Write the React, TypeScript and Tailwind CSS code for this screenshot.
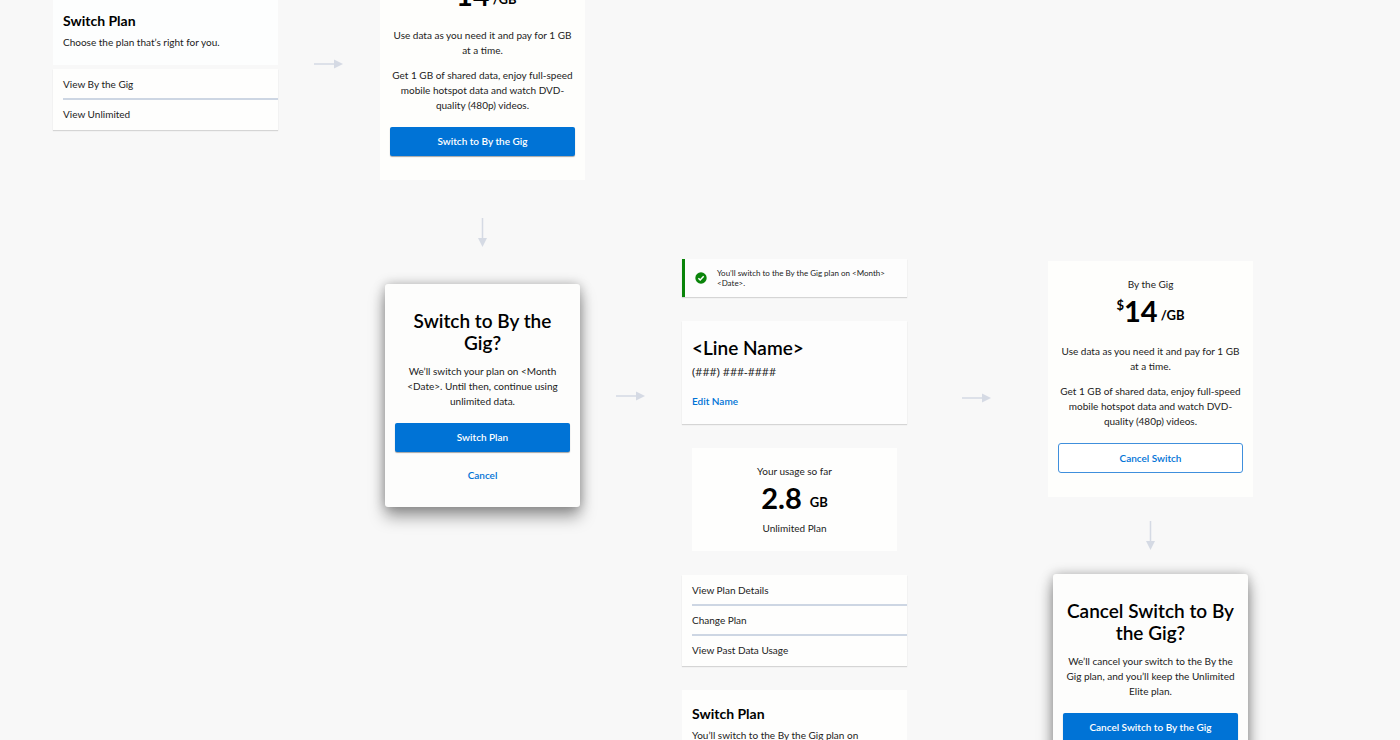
import type { ReactNode } from "react";

function ArrowRight({ className }: { className: string }) {
  return (
    <svg className={`absolute ${className}`} width="29" height="10" viewBox="0 0 29 10" aria-hidden="true">
      <path d="M0 5H21" stroke="#d5dae4" strokeWidth="1.5" />
      <path d="M20 0.5L29 5L20 9.5Z" fill="#d5dae4" />
    </svg>
  );
}

function ArrowDown({ className }: { className: string }) {
  return (
    <svg className={`absolute ${className}`} width="11" height="29" viewBox="0 0 11 29" aria-hidden="true">
      <path d="M5.5 0V21" stroke="#d5dae4" strokeWidth="1.5" />
      <path d="M1 20L5.5 29L10 20Z" fill="#d5dae4" />
    </svg>
  );
}

function PrimaryButton({ children }: { children: ReactNode }) {
  return (
    <button
      type="button"
      className="h-[29px] w-full rounded-xs bg-[#0073d6] text-[10px] font-semibold text-white shadow-[0_1px_1px_rgba(0,0,0,0.35)]"
    >
      {children}
    </button>
  );
}

function PriceCard({ action }: { action: ReactNode }) {
  return (
    <section className="w-[205px] bg-[#fefefc] px-[10px] pt-4 pb-6 text-center">
      <p>By the Gig</p>
      <p className="flex h-[36px] items-center justify-center font-bold text-black">
        <span className="pb-[10px] text-[13px]">$</span>
        <span className="text-[29px]">14</span>
        <span className="pt-[11px] pl-[3px] text-[13px]">/GB</span>
      </p>
      <p className="mt-4">
        Use data as you need it and pay for 1 GB
        <br />
        at a time.
      </p>
      <p className="mt-[10px]">
        Get 1 GB of shared data, enjoy full-speed
        <br />
        mobile hotspot data and watch DVD-
        <br />
        quality (480p) videos.
      </p>
      <div className="mt-[14px]">{action}</div>
    </section>
  );
}

function Dialog({ title, body, confirm }: { title: ReactNode; body: ReactNode; confirm: string }) {
  return (
    <section
      role="dialog"
      className="w-[195px] rounded-[3px] bg-[#fdfdfc] px-[10px] pt-[26px] pb-6 text-center shadow-[0_10px_16px_rgba(0,0,0,0.36),0_0_12px_rgba(0,0,0,0.26)]"
    >
      <h2 className="text-[19px] leading-[22px] font-semibold text-black">{title}</h2>
      <p className="mt-[10px] mb-[14px]">{body}</p>
      <PrimaryButton>{confirm}</PrimaryButton>
      <button type="button" className="mt-4 font-semibold text-[#0073d6]">
        Cancel
      </button>
    </section>
  );
}

function LinkList({ items }: { items: string[] }) {
  return (
    <ul className="bg-[#fefefd] pt-px pl-[10px] shadow-[0_1px_1px_rgba(0,0,0,0.14)]">
      {items.map((item) => (
        <li key={item} className="h-[30px] border-b-2 border-[#cdd6e3] last:border-b-0">
          <a href="#" className="block pt-[7px]">
            {item}
          </a>
        </li>
      ))}
    </ul>
  );
}

export default function App() {
  return (
    <main className="relative h-screen overflow-hidden bg-[#f8f8f8] font-['Lato',sans-serif] text-[10px] leading-[15px] text-[#222]">
      <div className="absolute top-0 left-[53px] flex w-[225px] flex-col gap-1">
        <section className="bg-[#fdfefe] px-[10px] pt-[13px] pb-[15px]">
          <h2 className="text-[14px] leading-[15px] font-bold text-black">Switch Plan</h2>
          <p className="mt-[7px]">Choose the plan that’s right for you.</p>
        </section>
        <LinkList items={["View By the Gig", "View Unlimited"]} />
      </div>

      <ArrowRight className="top-[59px] left-[314px]" />

      <div className="absolute top-[-55px] left-[380px]">
        <PriceCard action={<PrimaryButton>Switch to By the Gig</PrimaryButton>} />
      </div>

      <ArrowDown className="top-[218px] left-[477px]" />

      <div className="absolute top-[284px] left-[385px]">
        <Dialog
          title={
            <>
              Switch to By the
              <br />
              Gig?
            </>
          }
          body={
            <>
              We’ll switch your plan on &lt;Month
              <br />
              &lt;Date&gt;. Until then, continue using
              <br />
              unlimited data.
            </>
          }
          confirm="Switch Plan"
        />
      </div>

      <ArrowRight className="top-[391px] left-[616px]" />

      <div className="absolute top-[259px] left-[682px] flex w-[225px] flex-col gap-6">
        <section
          role="status"
          className="flex items-center gap-[10px] border-l-3 border-[#0a840a] bg-[#fdfdfd] py-[9px] pl-[10px] text-[8px] leading-[10px] shadow-[0_1px_1px_rgba(0,0,0,0.14)]"
        >
          <svg width="12" height="12" viewBox="0 0 12 12" aria-hidden="true">
            <circle cx="6" cy="6" r="5.7" fill="#0a840a" />
            <path d="M3.4 6.2L5.2 8L8.7 4.3" fill="none" stroke="#fff" strokeWidth="1.5" />
          </svg>
          <p>
            You’ll switch to the By the Gig plan on &lt;Month&gt;
            <br />
            &lt;Date&gt;.
          </p>
        </section>

        <section className="bg-[#fdfdfd] px-[10px] pt-4 pb-[15px] shadow-[0_1px_1px_rgba(0,0,0,0.14)]">
          <h2 className="text-[19px] leading-[22px] font-semibold text-black">&lt;Line Name&gt;</h2>
          <p className="mt-[5px] font-['Noto_Sans',sans-serif] text-[11px]">(###) ###-####</p>
          <a href="#" className="mt-[15px] block font-semibold text-[#0073d6]">
            Edit Name
          </a>
        </section>

        <section className="mx-[10px] bg-[#fefefd] pt-4 pb-[15px] text-center">
          <p>Your usage so far</p>
          <p className="mb-[6px] flex h-[36px] items-center justify-center gap-2 font-bold text-black">
            <span className="text-[29px]">2.8</span>
            <span className="pt-[11px] text-[13px]">GB</span>
          </p>
          <p>Unlimited Plan</p>
        </section>

        <LinkList items={["View Plan Details", "Change Plan", "View Past Data Usage"]} />

        <section className="bg-[#fefefd] px-[10px] pt-4 pb-[15px]">
          <h2 className="text-[14px] leading-[15px] font-bold text-black">Switch Plan</h2>
          <p className="mt-[7px]">You’ll switch to the By the Gig plan on</p>
        </section>
      </div>

      <ArrowRight className="top-[393px] left-[962px]" />

      <div className="absolute top-[261px] left-[1048px]">
        <PriceCard
          action={
            <button
              type="button"
              className="h-[30px] w-full rounded-[3px] border border-[#3f8fdc] bg-white font-semibold text-[#0073d6]"
            >
              Cancel Switch
            </button>
          }
        />
      </div>

      <ArrowDown className="top-[521px] left-[1145px]" />

      <div className="absolute top-[574px] left-[1053px]">
        <Dialog
          title={
            <>
              Cancel Switch to By
              <br />
              the Gig?
            </>
          }
          body={
            <>
              We’ll cancel your switch to the By the
              <br />
              Gig plan, and you’ll keep the Unlimited
              <br />
              Elite plan.
            </>
          }
          confirm="Cancel Switch to By the Gig"
        />
      </div>
    </main>
  );
}
